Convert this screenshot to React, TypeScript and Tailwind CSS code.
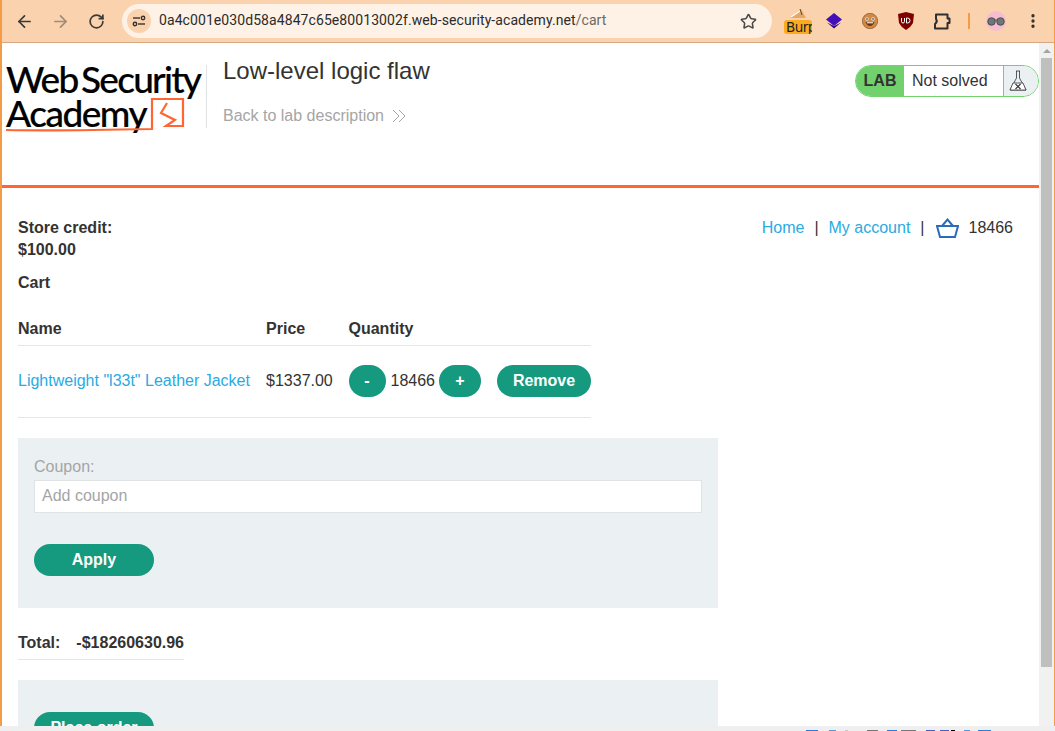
import { ArrowLeft, ArrowRight, RotateCw, Star, MoreVertical } from "lucide-react";

function Logo() {
  return (
    <div className="relative w-[197px] h-[70px] shrink-0 font-['Lato',sans-serif] font-medium text-black [-webkit-text-stroke:0.2px_black]">
      <div className="-mt-[1px] text-[37px] leading-[34px] tracking-[-1.75px] [word-spacing:-4px] whitespace-nowrap">Web Security</div>
      <div className="text-[37px] leading-[33px] tracking-[-1.5px] whitespace-nowrap">Academy</div>
      <svg className="absolute left-0 top-0" width="197" height="72" viewBox="0 0 197 72" fill="none">
        <path d="M-1 68 C40 69 100 68 146 67 L146 37 L177 37 L177 64 L160 64 L169 58 L155 51 L161 41" stroke="#ff6633" strokeWidth="2.2" />
      </svg>
    </div>
  );
}

function Basket() {
  return (
    <svg className="block" width="23" height="20" viewBox="0 0 23 20" fill="none" stroke="#2b6cb8" strokeWidth="2">
      <path d="M1 8 H22 L19 19 H4 Z" />
      <path d="M6 8 L11.5 1.5 L17 8" />
    </svg>
  );
}

function Toolbar() {
  return (
    <div className="h-[43px] bg-[#fad3ae] border-b border-[#d6a983] flex items-center shrink-0">
      <div className="flex items-center pl-[4px]">
        <div className="w-[36px] flex justify-center"><ArrowLeft size={19} strokeWidth={2.2} className="text-[#3a3a3a]" /></div>
        <div className="w-[36px] flex justify-center"><ArrowRight size={19} strokeWidth={2.2} className="text-[#a18a76]" /></div>
        <div className="w-[36px] flex justify-center"><RotateCw size={17} strokeWidth={2.4} className="text-[#3a3a3a]" /></div>
      </div>
      <div className="ml-[8px] w-[650px] h-[34px] rounded-full bg-[#fef1e6] flex items-center pl-[5px] pr-[15px]">
        <div className="w-[24px] h-[24px] rounded-full bg-[#fad3ae] flex items-center justify-center">
          <svg width="14" height="12" viewBox="0 0 14 12" fill="none" stroke="#333" strokeWidth="1.4">
            <path d="M1 3 H8" />
            <circle cx="11" cy="3" r="1.7" />
            <path d="M6 9 H13" />
            <circle cx="3" cy="9" r="1.7" />
          </svg>
        </div>
        <div className="ml-[8px] -mt-[1px] text-[14px] text-[#2b2b2b] font-['Roboto',sans-serif] tracking-[0.08px]">
          0a4c001e030d58a4847c65e80013002f.web-security-academy.net<span className="text-[#6d6a67]">/cart</span>
        </div>
        <Star size={17} strokeWidth={2.2} className="ml-auto text-[#4a4a4a]" />
      </div>
      <div className="ml-[8px] w-[36px] h-[30px] flex justify-center">
        <div className="relative w-[28px] h-[30px]">
          <div className="absolute left-0 bottom-[2px] w-[28px] h-[14px] rounded-[3px] bg-[#fbab1f] text-[13.5px] leading-[14px] font-['DejaVu_Sans',sans-serif] text-[#222] overflow-hidden pl-[2px] tracking-[-0.5px]">Burp</div>
          <svg className="absolute left-[5px] top-[1px]" width="18" height="12" viewBox="0 0 18 12" fill="none">
            <path d="M1 11 L12 2 L17 11 Z" fill="#e8a860" />
            <path d="M2 10 L11 4" stroke="#fff" strokeWidth="1.2" />
            <path d="M11 2 L13 8" stroke="#333" strokeWidth="0.8" />
          </svg>
        </div>
      </div>
      <div className="w-[36px] flex justify-center">
        <svg width="16" height="16" viewBox="0 0 16 16">
          <path d="M8 0 L16 6.5 L8 13 L0 6.5 Z" fill="#4310b8" />
          <path d="M1 9.5 L8 15.5 L15 9.5 L8 13 Z" fill="#2e0a85" />
        </svg>
      </div>
      <div className="w-[36px] flex justify-center">
        <svg width="16" height="16" viewBox="0 0 16 16">
          <circle cx="8" cy="8" r="7.7" fill="#d08a48" stroke="#7a4a20" strokeWidth="0.6" />
          <circle cx="5" cy="6" r="1.8" fill="#f3e6d0" />
          <circle cx="11" cy="6" r="1.8" fill="#f3e6d0" />
          <circle cx="5" cy="6" r="0.8" fill="#222" />
          <circle cx="11" cy="6" r="0.8" fill="#222" />
          <path d="M3.5 9 Q8 10 12.5 9 Q11 13 8 13 Q5 13 3.5 9 Z" fill="#6a3616" />
          <path d="M5 9.8 H11" stroke="#fff" strokeWidth="1" />
        </svg>
      </div>
      <div className="w-[36px] flex justify-center">
        <svg width="16" height="18" viewBox="0 0 16 18">
          <path d="M8 0 L16 2 L15 11 Q13 15 8 18 Q3 15 1 11 L0 2 Z" fill="#800000" />
          <path d="M3.5 6 V9.5 Q3.5 11 5 11 Q6.5 11 6.5 9.5 V6 M8.5 6 V11 H9.5 Q12 11 12 8.5 Q12 6 9.5 6 Z" fill="none" stroke="#fff" strokeWidth="1" />
        </svg>
      </div>
      <div className="w-[36px] flex justify-center">
        <svg width="18" height="17" viewBox="0 0 18 17" fill="none" stroke="#2f2f2f" strokeWidth="2" strokeLinejoin="round">
          <path d="M3 1.5 H14.5 V5.5 H16.5 V10 H14.5 V15.5 H2 V11 Q5 8.5 3 6 Z" />
        </svg>
      </div>
      <div className="ml-[8px] w-[2px] h-[16px] bg-[#f49b45]" />
      <div className="ml-[16px] w-[20px] h-[20px] rounded-full bg-[#f6bdd0] flex items-center justify-center">
        <svg width="18" height="9" viewBox="0 0 18 9">
          <circle cx="4.5" cy="4.5" r="3.8" fill="#6e7678" stroke="#333" strokeWidth="0.7" />
          <circle cx="13.5" cy="4.5" r="3.8" fill="#6e7678" stroke="#333" strokeWidth="0.7" />
          <path d="M8 3 H10" stroke="#333" strokeWidth="0.8" />
        </svg>
      </div>
      <MoreVertical size={18} strokeWidth={2.4} className="ml-[18px] text-[#2f2f2f]" />
    </div>
  );
}

function Header() {
  return (
    <div className="h-[145px] border-b-[3px] border-[#ff6633] flex items-start relative shrink-0">
      <div className="pl-[4px] pt-[20px]">
        <Logo />
      </div>
      <div className="ml-[3px] mt-[22px] h-[63px] border-l border-[#e0e3e5] pl-[16px]">
        <h2 className="text-[24px] leading-[28px] text-[#333332] -mt-[8px]">Low-level logic flaw</h2>
        <div className="mt-[19px] flex items-center text-[16px] text-[#a5a5a5]">
          Back to lab description
          <svg className="ml-[8px]" width="14" height="14" viewBox="0 0 14 14" fill="none" stroke="#a5a5a5" strokeWidth="1">
            <path d="M1 1 L7 7 L1 13" />
            <path d="M7 1 L13 7 L7 13" />
          </svg>
        </div>
      </div>
      <div className="absolute right-0 top-[22px] h-[32px] w-[184px] rounded-full border border-[#70d16d] flex overflow-hidden text-[16px]">
        <div className="w-[48px] bg-[#70d16d] font-bold text-[#333332] flex items-center justify-center">LAB</div>
        <div className="w-[99px] bg-white text-[#333332] flex items-center pl-[8px]">Not solved</div>
        <div className="flex-1 bg-[#ebf0f2] border-l border-[#70d16d] flex items-center pl-[5px]">
          <svg width="18" height="22" viewBox="0 0 18 22" fill="none" stroke="#333" strokeWidth="0.8">
            <path d="M7 1 H11 M7.5 1 V8 L1 20 H17 L10.5 8 V1" />
            <path d="M4 13 H14 L17 20 H1 Z" fill="#fff" />
            <path d="M6.5 14 L11.5 19 M11.5 14 L6.5 19" strokeWidth="1.2" />
          </svg>
        </div>
      </div>
    </div>
  );
}

function Panel({ className, children }: { className: string; children: React.ReactNode }) {
  return <div className={`w-[700px] bg-[#ebf0f2] px-[16px] ${className}`}>{children}</div>;
}

function CartPage() {
  return (
    <div className="px-[16px] pt-[29px] text-[16px] leading-[22.4px] text-[#333332] relative">
      <div className="absolute right-[26px] top-[29px] flex items-center">
        <a className="text-[#29abe2]">Home</a>
        <span className="mx-[10px]">|</span>
        <a className="text-[#29abe2]">My account</a>
        <span className="mx-[10px]">|</span>
        <span className="ml-[1px] mr-[10px]"><Basket /></span>
        <span>18466</span>
      </div>
      <div className="font-bold">Store credit:</div>
      <div className="font-bold">$100.00</div>
      <div className="font-bold mt-[10px]">Cart</div>
      <table className="mt-[18px] w-[573px] border-collapse">
        <thead>
          <tr className="border-b border-[#e6e6e6]">
            <th className="text-left font-bold pb-[4px] pt-[6px] w-[248.5px]">Name</th>
            <th className="text-left font-bold pb-[4px] pt-[6px] w-[82.5px]">Price</th>
            <th className="text-left font-bold pb-[4px] pt-[6px]">Quantity</th>
          </tr>
        </thead>
        <tbody>
          <tr className="border-b border-[#e6e6e6]">
            <td className="h-[72px] text-[#29abe2]">Lightweight "l33t" Leather Jacket</td>
            <td>$1337.00</td>
            <td>
              <div className="flex items-center">
                <button className="w-[37px] h-[32px] rounded-full bg-[#159a80] text-white font-bold">-</button>
                <span className="ml-[5px]">18466</span>
                <button className="ml-[4px] w-[42px] h-[32px] rounded-full bg-[#159a80] text-white font-bold">+</button>
                <button className="ml-[16px] w-[94px] h-[32px] rounded-full bg-[#159a80] text-white font-bold">Remove</button>
              </div>
            </td>
          </tr>
        </tbody>
      </table>
      <Panel className="mt-[20px] h-[170px] pt-[18px]">
        <div className="text-[#a5a5a5]">Coupon:</div>
        <div className="mt-[2px] h-[33px] bg-white border border-[#dfe3e5] flex items-center px-[7px] text-[#a5a5a5]">Add coupon</div>
        <button className="mt-[31px] w-[120px] h-[32px] rounded-full bg-[#159a80] text-white font-bold">Apply</button>
      </Panel>
      <div className="mt-[24px] w-fit border-b border-[#e6e6e6] font-bold flex gap-[16px] pb-[5px]">
        <span>Total:</span>
        <span>-$18260630.96</span>
      </div>
      <Panel className="mt-[20px] h-[100px] pt-[32px]">
        <button className="w-[120px] h-[32px] rounded-full bg-[#159a80] text-white font-bold">Place order</button>
      </Panel>
    </div>
  );
}

function Taskbar() {
  return (
    <div className="h-[5px] bg-[#efefef] relative shrink-0 overflow-hidden">
      <div className="absolute bottom-0 left-[806px] flex h-[1px]">
        <div className="w-[12px] bg-[#2b7de0]" />
        <div className="ml-[11px] w-[7px] bg-[#4f9be8]" />
        <div className="ml-[9px] w-[3px] bg-[#c8c8c8]" />
        <div className="ml-[19px] w-[11px] bg-[#777777]" />
        <div className="ml-[9px] w-[10px] bg-[#2b7de0]" />
        <div className="ml-[4px] w-[15px] bg-[#777777]" />
        <div className="ml-[10px] w-[9px] bg-[#4560c8]" />
        <div className="ml-[5px] w-[9px] bg-[#4560c8]" />
        <div className="ml-[2px] w-[4px] bg-black" />
        <div className="ml-[9px] w-[6px] bg-[#4f9be8]" />
        <div className="ml-[8px] w-[13px] bg-[#2b7de0]" />
      </div>
    </div>
  );
}

export default function App() {
  return (
    <div className="h-[731px] w-[1055px] overflow-hidden flex flex-col font-['Liberation_Sans',Arial,sans-serif] bg-white">
      <div className="flex-1 min-h-0 flex flex-col border-l-2 border-r-[1px] border-[#f49b45]">
        <Toolbar />
        <div className="flex-1 min-h-0 flex">
          <div className="flex-1 min-w-0 overflow-hidden">
            <Header />
            <CartPage />
          </div>
          <div className="w-[15px] shrink-0 bg-[#f1f1f1] flex flex-col">
            <div className="h-[15px] flex items-center justify-center">
              <div className="w-0 h-0 border-x-[4px] border-x-transparent border-b-[4px] border-b-[#a3a3a3]" />
            </div>
            <div className="h-[609px] mx-[2px] bg-[#bfbfbf]" />
          </div>
        </div>
      </div>
      <Taskbar />
    </div>
  );
}
